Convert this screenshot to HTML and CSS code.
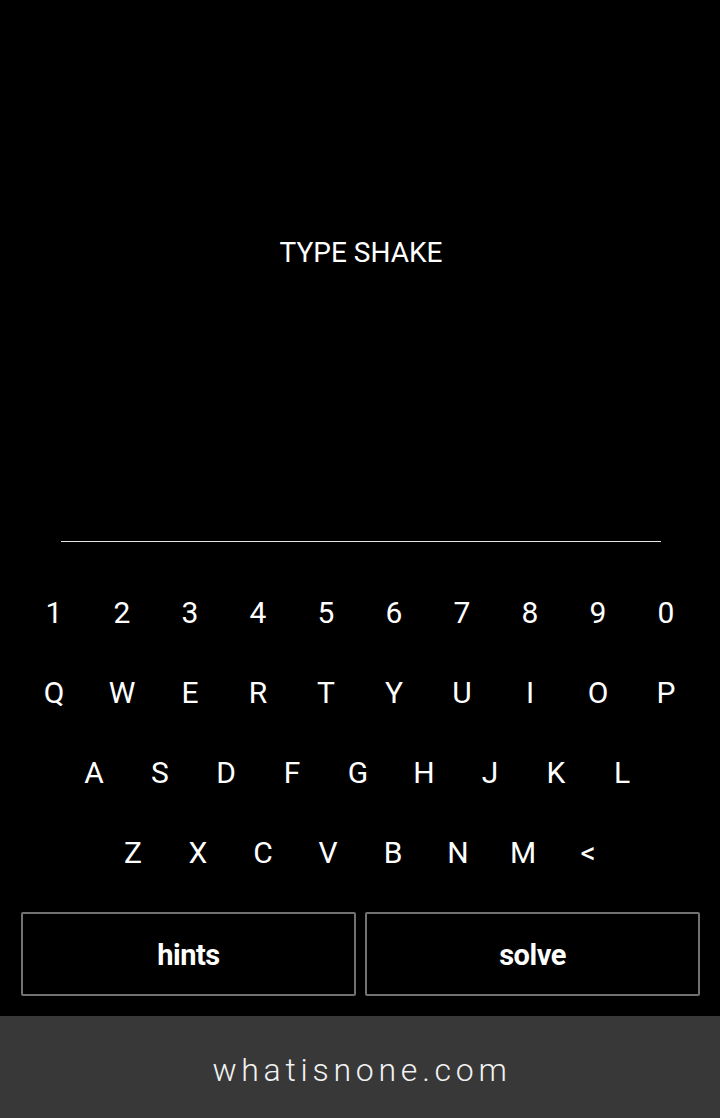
FILE: index.html
```html
<!DOCTYPE html>
<html>
<head>
<meta charset="utf-8">
<link rel="stylesheet" href="styles.css">
</head>
<body>
<div class="app">
  <div class="display">
    <div class="title">TYPE SHAKE</div>
  </div>
  <div class="rule"></div>
  <div class="keyboard">
    <div class="row r1">
      <span class="key">1</span><span class="key">2</span><span class="key">3</span><span class="key">4</span><span class="key">5</span><span class="key">6</span><span class="key">7</span><span class="key">8</span><span class="key">9</span><span class="key">0</span>
    </div>
    <div class="row r2">
      <span class="key">Q</span><span class="key">W</span><span class="key">E</span><span class="key">R</span><span class="key">T</span><span class="key">Y</span><span class="key">U</span><span class="key">I</span><span class="key">O</span><span class="key">P</span>
    </div>
    <div class="row r3">
      <span class="key">A</span><span class="key">S</span><span class="key">D</span><span class="key">F</span><span class="key">G</span><span class="key">H</span><span class="key">J</span><span class="key">K</span><span class="key">L</span>
    </div>
    <div class="row r4">
      <span class="key">Z</span><span class="key">X</span><span class="key">C</span><span class="key">V</span><span class="key">B</span><span class="key">N</span><span class="key">M</span><span class="key">&lt;</span>
    </div>
  </div>
  <div class="actions">
    <button class="btn">hints</button>
    <button class="btn">solve</button>
  </div>
  <footer class="footer">whatisnone.com</footer>
</div>
</body>
</html>
```

FILE: styles.css
```css
html, body {
  margin: 0;
  padding: 0;
  background: #000;
}
body {
  width: 720px;
  height: 1118px;
  overflow: hidden;
  font-family: Roboto, "Liberation Sans", sans-serif;
  color: #fff;
}
.app {
  display: flex;
  flex-direction: column;
  height: 1118px;
}
.display {
  height: 541px;
  display: flex;
  justify-content: center;
  padding-top: 233px;
  box-sizing: border-box;
}
.title {
  font-size: 28px;
  line-height: 40px;
  height: 40px;
  padding-left: 2px;
}
.rule {
  height: 1px;
  background: #e6e6e6;
  margin: 0 59px 0 61px;
}
.keyboard {
  display: flex;
  flex-direction: column;
  padding-top: 31px;
}
.row {
  display: flex;
  justify-content: center;
  height: 80px;
  align-items: center;
}
.key {
  text-align: center;
  font-size: 30px;
  line-height: 40px;
}
.r1 .key, .r2 .key { width: 68px; }
.r3 .key { width: 66px; }
.r4 .key { width: 65px; }
.r3 { padding-right: 4px; }
.r4 { padding-left: 1px; }
.actions {
  display: grid;
  grid-template-columns: 1fr 1fr;
  gap: 9px;
  padding: 19px 20px 0 21px;
}
.btn {
  height: 84px;
  background: #000;
  border: 2px solid #727272;
  border-radius: 2px;
  color: #fff;
  font-family: Roboto, "Liberation Sans", sans-serif;
  font-weight: 700;
  font-size: 29px;
  letter-spacing: -0.5px;
  padding: 2px 0 0 0;
}
.footer {
  margin-top: 20px;
  flex: 1;
  background: #383838;
  display: flex;
  align-items: center;
  justify-content: center;
  font-weight: 300;
  font-size: 32px;
  letter-spacing: 4.75px;
  color: #f2f2f2;
  padding-left: 4px;
  padding-top: 6px;
}
```
